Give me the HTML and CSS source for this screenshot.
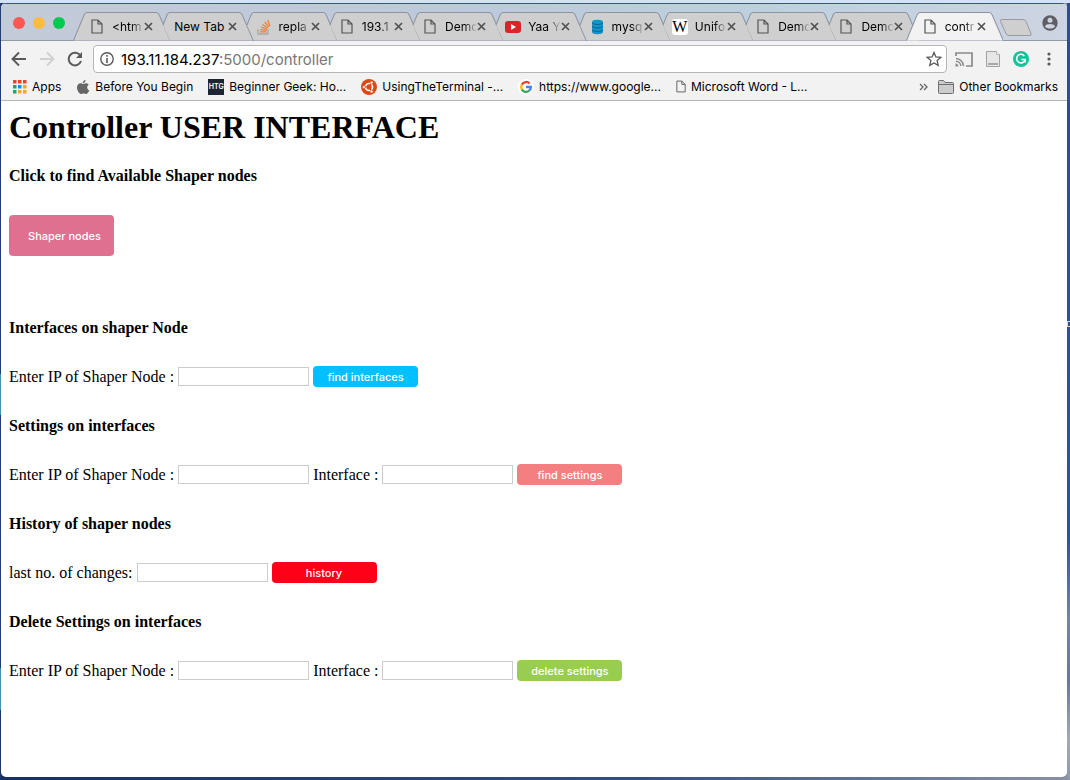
FILE: index.html
```html
<!DOCTYPE html>
<html lang="en">
<head>
<meta charset="utf-8">
<title>controller</title>
<link rel="stylesheet" href="styles.css">
</head>
<body>
<svg class="defs" aria-hidden="true">
  <defs>
    <symbol id="doc" viewBox="0 0 12 15"><path d="M1 1h6l4 4v9H1zM7 1v4h4" fill="none" stroke="currentColor" stroke-width="1.2"/></symbol>
    <symbol id="x" viewBox="0 0 9 9"><path d="M1 1l7 7M8 1L1 8" stroke="#505050" stroke-width="1.7"/></symbol>
    <symbol id="tab-first" viewBox="0 0 97 29" preserveAspectRatio="none"><path d="M.5 28.5L11 3Q12 .5 14 .5H83Q85 .5 86 3L97 28.5"/></symbol>
    <symbol id="tab-next" viewBox="0 0 97 29" preserveAspectRatio="none"><path stroke="none" d="M14 28.5L7 13 11 3Q12 .5 14 .5H83Q85 .5 86 3L97 28.5z"/><path fill="none" d="M7 13L11 3Q12 .5 14 .5H83Q85 .5 86 3L97 28.5"/></symbol>
  </defs>
</svg>
<span class="desk-mark"></span>
<div class="window">
  <header class="strip">
    <div class="lights"><button class="light red" aria-label="Close window"></button><button class="light amber" aria-label="Minimize"></button><button class="light green" aria-label="Zoom"></button></div>
    <div class="tabs">
      <div class="tab"><svg class="shape"><use href="#tab-first"/></svg><svg class="fav doc"><use href="#doc"/></svg><span class="name">&lt;htm</span><button class="close" aria-label="Close tab"><svg><use href="#x"/></svg></button></div>
      <div class="tab plain"><svg class="shape"><use href="#tab-next"/></svg><span class="name">New Tab</span><button class="close" aria-label="Close tab"><svg><use href="#x"/></svg></button></div>
      <div class="tab"><svg class="shape"><use href="#tab-next"/></svg><svg class="fav" viewBox="0 0 16 16"><path d="M2 10v5h10v-5" fill="none" stroke="#a8a8a8" stroke-width="1.3"/><path d="M4 12.8h6.500M4.200 10.600l6.400.7M4.900 8.200l6.200 1.600M6.400 5.500l5.400 3.300M8.700 3l4.200 4.900M11.800 1l2 6" stroke="#f08030" stroke-width="1.300"/></svg><span class="name">repla</span><button class="close" aria-label="Close tab"><svg><use href="#x"/></svg></button></div>
      <div class="tab"><svg class="shape"><use href="#tab-next"/></svg><svg class="fav doc"><use href="#doc"/></svg><span class="name">193.1</span><button class="close" aria-label="Close tab"><svg><use href="#x"/></svg></button></div>
      <div class="tab"><svg class="shape"><use href="#tab-next"/></svg><svg class="fav doc"><use href="#doc"/></svg><span class="name">Dem<i>o</i></span><button class="close" aria-label="Close tab"><svg><use href="#x"/></svg></button></div>
      <div class="tab"><svg class="shape"><use href="#tab-next"/></svg><svg class="fav" viewBox="0 0 16 16"><rect y="2" width="16" height="12" rx="3" fill="#d9252a"/><path d="M6 5l5 3-5 3z" fill="#fff"/></svg><span class="name">Yaa Y</span><button class="close" aria-label="Close tab"><svg><use href="#x"/></svg></button></div>
      <div class="tab"><svg class="shape"><use href="#tab-next"/></svg><svg class="fav" viewBox="0 0 16 16"><path d="M3 3c0-3 11-3 11 0v10c0 3-11 3-11 0z" fill="#1593c6"/><path d="M3 4c2 2 9 2 11 0M3 7.500c2 2 9 2 11 0M3 11c2 2 9 2 11 0" fill="none" stroke="#08668f"/></svg><span class="name">mysq</span><button class="close" aria-label="Close tab"><svg><use href="#x"/></svg></button></div>
      <div class="tab"><svg class="shape"><use href="#tab-next"/></svg><span class="fav wiki">W</span><span class="name">Unifo</span><button class="close" aria-label="Close tab"><svg><use href="#x"/></svg></button></div>
      <div class="tab"><svg class="shape"><use href="#tab-next"/></svg><svg class="fav doc"><use href="#doc"/></svg><span class="name">Dem<i>o</i></span><button class="close" aria-label="Close tab"><svg><use href="#x"/></svg></button></div>
      <div class="tab"><svg class="shape"><use href="#tab-next"/></svg><svg class="fav doc"><use href="#doc"/></svg><span class="name">Dem<i>o</i></span><button class="close" aria-label="Close tab"><svg><use href="#x"/></svg></button></div>
      <div class="tab active"><svg class="shape"><use href="#tab-first"/></svg><svg class="fav doc"><use href="#doc"/></svg><span class="name">contr</span><button class="close" aria-label="Close tab"><svg><use href="#x"/></svg></button></div>
    </div>
    <button class="new-tab" aria-label="New tab"><svg viewBox="0 0 34 17"><path d="M3 .5h21q2 0 3 2l5 12q1 2-1 2H10q-2 0-3-2L1.500 2.500Q1 .5 3 .5z" fill="#cfcfcf" stroke="#9a9a9e"/></svg></button>
    <button class="user" aria-label="Profile"><svg viewBox="0 0 16 16"><circle cx="8" cy="8" r="7.700" fill="#5f5f63"/><circle cx="8" cy="5.300" r="2.500" fill="#cdd3df"/><path d="M3 11.500C4 8.300 12 8.300 13 11.500 11 14.300 5 14.300 3 11.500z" fill="#cdd3df"/></svg></button>
  </header>
  <nav class="toolbar">
    <button aria-label="Back"><svg viewBox="0 0 16 16"><path d="M15 8H2M8 1.500L1.500 8 8 14.500" fill="none" stroke="#5a5a5a" stroke-width="1.900"/></svg></button>
    <button aria-label="Forward"><svg viewBox="0 0 16 16"><path d="M1 8h13M8 1.500L14.500 8 8 14.500" fill="none" stroke="#d0d0d0" stroke-width="1.900"/></svg></button>
    <button aria-label="Reload"><svg viewBox="0 0 16 16"><path d="M13.500 5A6.300 6.300 0 1 0 14 10" fill="none" stroke="#5a5a5a" stroke-width="2"/><path d="M15 1v6H9z" fill="#5a5a5a"/></svg></button>
    <div class="omnibox">
      <svg class="info" viewBox="0 0 14 14"><circle cx="7" cy="7" r="6.200" fill="none" stroke="#5a5a5a" stroke-width="1.400"/><path d="M7 6v5M7 3v1.700" stroke="#5a5a5a" stroke-width="1.600"/></svg>
      <span class="url"><b>193.11.184.237</b>:5000/controller</span>
      <button aria-label="Bookmark"><svg class="star" viewBox="0 0 16 16"><path d="M8 1.500l1.900 4.500 4.900.4-3.700 3.200 1.100 4.800L8 11.900l-4.200 2.500 1.100-4.800L1.200 6.400 6.100 6z" fill="none" stroke="#5a5a5a" stroke-width="1.300"/></svg></button>
    </div>
    <div class="tools">
      <button aria-label="Cast"><svg class="cast" viewBox="0 0 18 15"><path d="M1 4V1h16v13h-6" fill="none" stroke="#8a8a8a" stroke-width="1.700"/><path d="M1 6.500A8 8 0 0 1 8.500 14M1 9.200A5 5 0 0 1 5.800 14" fill="none" stroke="#8a8a8a" stroke-width="1.500"/><path d="M.5 11.500A3 3 0 0 1 3.300 14.500H.5z" fill="#8a8a8a"/></svg></button>
      <button aria-label="Documents"><svg viewBox="0 0 16 16"><path d="M1.500.5h10l3 3v12h-13z" fill="#e6e6e6" stroke="#a3a3a3"/><path d="M3 12h10v2H3z" fill="#a8a8a8"/><path d="M11.500.5v3h3" fill="#fff" stroke="#b5b5b5"/></svg></button>
      <button aria-label="Grammar"><svg viewBox="0 0 16 16"><circle cx="8" cy="8" r="8" fill="#15c39a"/><path d="M11.300 4.900A4.300 4.300 0 1 0 12.200 8.500H8.500M12.200 8.500v3" fill="none" stroke="#fff" stroke-width="1.500"/></svg></button>
      <button aria-label="Menu"><svg viewBox="0 0 16 16"><circle cx="8" cy="3" r="1.600" fill="#5a5a5a"/><circle cx="8" cy="8" r="1.600" fill="#5a5a5a"/><circle cx="8" cy="13" r="1.600" fill="#5a5a5a"/></svg></button>
    </div>
  </nav>
  <nav class="bookmarks">
    <a class="apps" href="#"><svg viewBox="0 0 14 14"><path d="M0 0h3.500v3.500H0zM5 0h3.500v3.500H5zM10 0h3.500v3.500H10z" fill="#ee4035"/><path d="M0 5h3.500v3.500H0zM0 10h3.500v3.500H0z" fill="#22a565"/><path d="M5 5h3.500v3.500H5z" fill="#1a8cf0"/><path d="M10 5h3.500v3.500H10zM5 10h3.500v3.500H5zM10 10h3.500v3.500H10z" fill="#f6a623"/></svg>Apps</a>
    <a class="begin" href="#"><svg viewBox="0 0 14 16"><path d="M9.700 1C9.500 3 8 4.200 6.700 4.100 6.600 2.500 8 1.200 9.700 1zM7 5c.8 0 1.500-.8 3-.8 1.200 0 2.200.6 2.800 1.500-2.300 1.400-2 4.600.5 5.600-.6 1.700-1.800 3.700-3.100 3.700-1 0-1.400-.6-2.600-.6s-1.700.6-2.600.6C3.200 15 1 11.500 1 8.600c0-2.700 1.700-4.300 3.500-4.300C5.600 4.300 6.400 5 7 5z" fill="#666"/></svg>Before You Begin</a>
    <a class="geek" href="#"><span class="htg">HTG</span>Beginner Geek: Ho...</a>
    <a class="terminal" href="#"><svg viewBox="0 0 16 16"><circle cx="8" cy="8" r="8" fill="#dd4814"/><circle cx="8" cy="8" r="3.500" fill="none" stroke="#fff" stroke-width="1.700"/><path d="M8 8H3M8 8l2.700-4.600M8 8l2.700 4.600" stroke="#dd4814" stroke-width="1"/><g fill="#fff" stroke="#dd4814" stroke-width=".6"><circle cx="2.900" cy="8" r="1.500"/><circle cx="10.600" cy="3.600" r="1.500"/><circle cx="10.600" cy="12.400" r="1.500"/></g></svg>UsingTheTerminal -...</a>
    <a class="google" href="#"><svg viewBox="0 0 16 16"><circle cx="8" cy="8" r="8" fill="#fff"/><g fill="none" stroke-width="2.300"><path d="M3.800 5.600A4.900 4.900 0 0 1 11.700 4.500" stroke="#ea4335"/><path d="M3.800 5.600A4.900 4.900 0 0 0 3.800 10.400" stroke="#fbbc05"/><path d="M3.800 10.400A4.900 4.900 0 0 0 11.200 11.700" stroke="#34a853"/><path d="M11.200 11.700A4.900 4.900 0 0 0 12.900 8H8" stroke="#4285f4"/></g></svg>https://www.google...</a>
    <a class="word" href="#"><svg class="doc-small"><use href="#doc"/></svg>Microsoft Word - L...</a>
    <button class="more" aria-label="More bookmarks"><svg viewBox="0 0 9 8"><path d="M1 1l3 3-3 3M5 1l3 3-3 3" fill="none" stroke="#666" stroke-width="1.300"/></svg></button>
    <a class="other" href="#"><svg viewBox="0 0 16 14"><path d="M.5 12.500v-11q0-1 1-1h4l1.500 2h7.500q1 0 1 1v9q0 1-1 1h-13q-1 0-1-1z" fill="#ccc" stroke="#707070"/><path d="M1 4.500h14" stroke="#707070"/></svg>Other Bookmarks</a>
  </nav>
  <main class="page">
    <h1>Controller USER INTERFACE</h1>
    <section class="intro">
      <h4>Click to find Available Shaper nodes</h4>
      <button class="btn shaper">Shaper nodes</button>
    </section>
    <section>
      <h4>Interfaces on shaper Node</h4>
      <form class="row"><label for="ip1">Enter IP of Shaper Node :</label><input id="ip1" type="text"><button type="button" class="btn find">find interfaces</button></form>
    </section>
    <section>
      <h4>Settings on interfaces</h4>
      <form class="row"><label for="ip2">Enter IP of Shaper Node :</label><input id="ip2" type="text"><label for="if2">Interface :</label><input id="if2" type="text"><button type="button" class="btn settings">find settings</button></form>
    </section>
    <section>
      <h4>History of shaper nodes</h4>
      <form class="row"><label for="changes">last no. of changes:</label><input id="changes" type="text"><button type="button" class="btn history">history</button></form>
    </section>
    <section>
      <h4>Delete Settings on interfaces</h4>
      <form class="row"><label for="ip3">Enter IP of Shaper Node :</label><input id="ip3" type="text"><label for="if3">Interface :</label><input id="if3" type="text"><button type="button" class="btn delete">delete settings</button></form>
    </section>
  </main>
</div>
</body>
</html>
```
FILE: styles.css
```css
* { box-sizing: border-box; }

body {
  margin: 0;
  min-height: 100vh;
  display: flex;
  padding: 3px 3px 3px 1px;
  background:
    linear-gradient(#d3e2f8, #d3e2f8) top / 100% 3px no-repeat,
    linear-gradient(#1f3f73 0 374px, #478fae 374px 415px, #1f3f73 415px 668px, #478fae 668px 710px, #1b376a 710px) left / 1px 100% no-repeat,
    linear-gradient(#2c4f86 0, #30568f 540px, #7287a6 620px, #64799d 680px, #a3a9b5 740px, #8e98a9 100%) right / 3px 100% no-repeat,
    linear-gradient(90deg, #17315f, #34507f 60%, #8992a3);
  font-family: "Liberation Serif", serif;
  color: #000;
}

button { border: 0; padding: 0; background: none; font: inherit; color: inherit; display: flex; align-items: center; justify-content: center; }
svg { display: block; flex: none; }
.defs { position: absolute; width: 0; height: 0; }
.desk-mark { position: absolute; right: 0; top: 321px; width: 3px; height: 6px; border: 1px solid #d5d7d9; border-right: 0; }

.window { flex: 1; min-width: 0; display: flex; flex-direction: column; border-radius: 5px; overflow: hidden; background: #fff; }

.strip {
  display: flex;
  height: 38px;
  padding-left: 12px;
  border-top: 1px solid #34568a;
  border-bottom: 1px solid #8e99a8;
  background: linear-gradient(90deg, #c3cad8, #bdc9dc 45%, #bdd0df 70%, #cdd4e2);
  font-family: Inter, sans-serif;
}
.lights { display: flex; gap: 8px; width: 60px; padding-top: 13px; }
.light { width: 12px; height: 12px; border-radius: 50%; }
.red { background: #fc5753; }
.amber { background: #fdbc40; }
.green { background: #00ca4e; }

.tabs { flex: 1; min-width: 0; display: flex; align-items: flex-end; margin-bottom: -1px; }
.tab { position: relative; flex: 1; min-width: 0; height: 29px; margin-right: -14px; padding: 0 17px 0 16px; display: flex; align-items: center; font-size: 12px; }
.tab:last-child { margin-right: 0; }
.shape { position: absolute; left: 0; top: 0; width: 100%; height: 29px; fill: #cfcfcf; stroke: #8e949e; }
.active .shape { fill: #f2f2f2; }
.fav, .name, .close { position: relative; }
.fav { flex: none; width: 16px; height: 16px; }
.doc { width: 12px; height: 15px; margin: 0 2px; color: #555; }
.wiki { border-radius: 3px; background: #fff; font: 16px/16px "Liberation Serif", serif; display: flex; justify-content: center; }
.name { flex: 1; min-width: 0; margin-left: 7px; white-space: nowrap; line-height: 18px; -webkit-mask-image: linear-gradient(90deg, #000 60%, transparent); mask-image: linear-gradient(90deg, #000 60%, transparent); }
.name i { font-style: normal; }
.plain .name { margin-left: 2px; -webkit-mask-image: none; mask-image: none; }
.close svg { width: 9px; height: 9px; }
.new-tab { width: 34px; margin-left: -4px; align-items: flex-end; padding-bottom: 4px; }
.new-tab svg { width: 34px; height: 17px; }
.user { width: 34px; padding-top: 2px; }
.user svg { width: 16px; height: 16px; }

.toolbar { display: flex; align-items: center; gap: 12px; height: 36px; padding: 0 10px; background: #f2f2f2; }
.toolbar svg { width: 16px; height: 16px; }
.omnibox { flex: 1; min-width: 0; display: flex; align-items: center; height: 28px; margin-left: -2px; padding: 0 4px 0 6px; border: 1px solid #b6b6b6; border-radius: 4px; background: #fff; font-family: Inter, sans-serif; font-size: 15px; color: #777; }
.toolbar .info { width: 14px; height: 14px; margin-right: 7px; }
.url { flex: 1; }
.url b { font-weight: 400; color: #000; }
.tools { display: flex; gap: 12px; margin-left: -4px; }
.toolbar .cast { width: 18px; height: 15px; }

.bookmarks { display: flex; align-items: center; height: 24px; padding: 0 9px 4px 12px; border-bottom: 1px solid #b6b6b6; background: #f2f2f2; font-family: Inter, sans-serif; font-size: 12px; }
.bookmarks a { display: flex; align-items: center; gap: 5px; color: inherit; text-decoration: none; white-space: nowrap; margin-right: 15px; }
.bookmarks svg { width: 16px; height: 16px; }
.bookmarks .apps svg { width: 14px; height: 14px; }
.bookmarks .begin svg { width: 14px; }
.htg { width: 16px; height: 16px; background: #1c2533; color: #fff; font-size: 7px; font-weight: 600; line-height: 16px; text-align: center; }
.bookmarks .doc-small { width: 10px; height: 13px; color: #666; }
.more { margin-left: auto; margin-right: 10px; }
.bookmarks .more svg { width: 9px; height: 8px; }
.bookmarks .other { margin-right: 0; }
.bookmarks .other svg { height: 14px; }

.page { padding: 8px; }
h1 { margin: 0 0 21px; font-size: 32px; line-height: 37px; }
h4 { margin: 0 0 29px; font-size: 16px; line-height: 18px; }
section { margin-bottom: 30px; }
.intro { margin-bottom: 63px; }
.intro h4 { margin-bottom: 30px; }
.row { display: flex; align-items: center; gap: 4px; height: 21px; font-size: 16px; line-height: 18px; }
.row input { width: 131px; height: 19px; padding: 1px; border: 1px solid #ccc; background: #fff; }
.btn { width: 105px; height: 21px; padding-top: 1px; border-radius: 4px; font: 500 11px/13px Inter, sans-serif; color: #fff; }
.shaper { height: 41px; padding-left: 6px; background: #df7090; }
.find { background: #00c0ff; }
.settings { background: #f47f80; }
.history { background: #ff0019; }
.delete { background: #98cd50; }
```
